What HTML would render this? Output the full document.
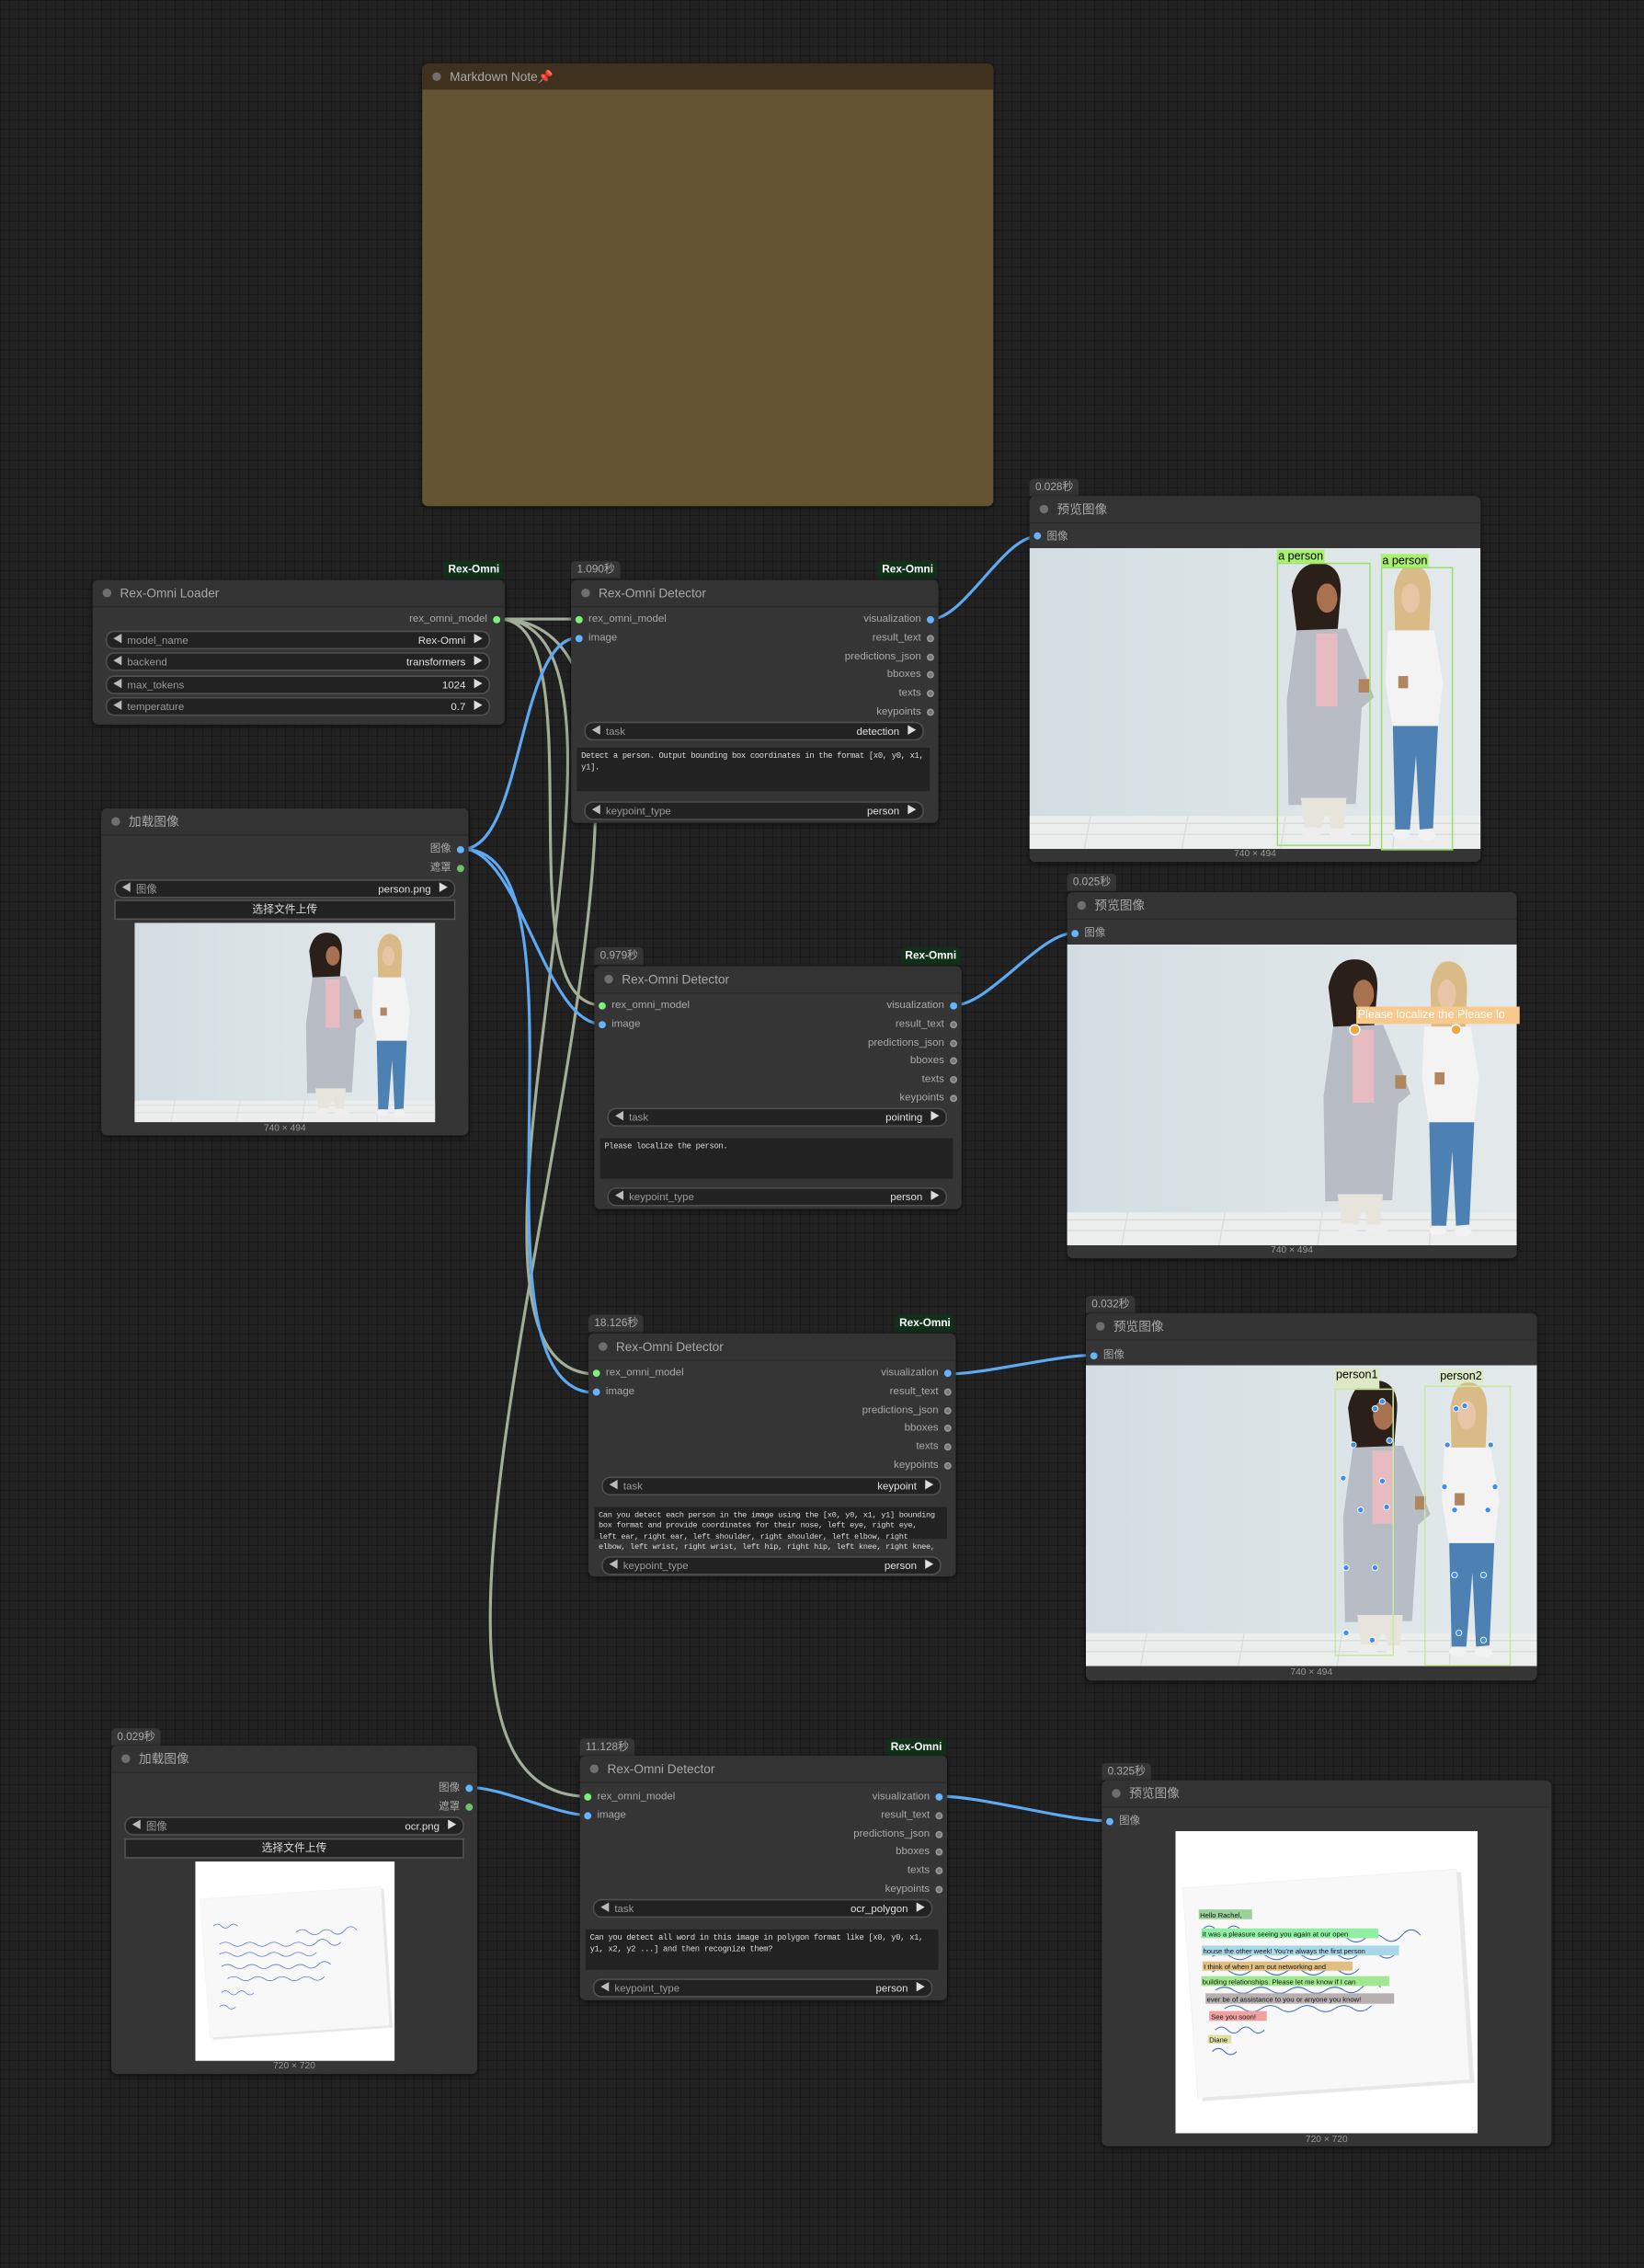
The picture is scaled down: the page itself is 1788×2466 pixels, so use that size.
<!DOCTYPE html>
<html><head><meta charset="utf-8">
<style>
html,body{margin:0;padding:0;width:1788px;height:2466px;overflow:hidden;background-color:#222;
background-image:linear-gradient(#1a1a1a 1px,transparent 1px),linear-gradient(90deg,#1a1a1a 1px,transparent 1px);background-size:10px 10px;}
#s{position:absolute;left:0;top:0;width:1137px;height:1568px;transform:scale(1.57256);transform-origin:0 0;font-family:"Liberation Sans","Noto Sans CJK SC",sans-serif;}
.n{position:absolute;background:#353535;border-radius:4px;box-shadow:0 1px 4px rgba(0,0,0,.6);}
.t{position:relative;height:18px;line-height:18px;background:#333;border-bottom:1px solid #2a2a2a;border-radius:4px 4px 0 0;font-size:8.7px;color:#a8a8a8;padding-left:19px;}
.t:before{content:"";position:absolute;left:7px;top:6px;width:6px;height:6px;border-radius:50%;background:#6f6f6f;}
.d{position:absolute;width:5px;height:5px;border-radius:50%;background:#777;border:0.5px solid #999;box-sizing:border-box}
.g{background:#7bf07b;border-color:#7bf07b}.b{background:#64b4ff;border-color:#64b4ff}.gg{background:#6cc36c;border-color:#6cc36c}
.li,.ro{position:absolute;font-size:7.3px;line-height:10px;color:#a9a9a9;white-space:nowrap}
.li{left:12px}.ro{right:12px}
.w{position:absolute;height:11px;line-height:11px;border-radius:6px;background:#222;border:1px solid #505050;font-size:7.3px;color:#9a9a9a;box-sizing:content-box}
.w .l{position:absolute;left:4px;font-size:7px;color:#bbb}
.w .k{position:absolute;left:14px}
.w .v{position:absolute;right:16px;color:#e0e0e0}
.w .r{position:absolute;right:4px;font-size:7px;color:#ddd}
.ta{position:absolute;background:#222;font-family:"Liberation Mono",monospace;font-size:5.6px;line-height:8.2px;color:#ddd;padding:2px 3px;box-sizing:border-box;overflow:visible;letter-spacing:-0.2px}
.btn{position:absolute;height:12px;line-height:12px;background:#222;border:1px solid #555;text-align:center;color:#ddd;font-size:7.5px}
.tb{position:absolute;height:12px;line-height:12px;background:#353535;border-radius:3px 3px 0 0;color:#aaa;font-size:7.5px;padding:0 4px}
.rb{position:absolute;height:12px;line-height:12px;background:#10301a;border-radius:3px 3px 0 0;color:#fff;font-size:7.5px;font-weight:bold;padding:0 3px}
.cap{position:absolute;font-size:6.5px;color:#999;text-align:center;width:100%}
.img{position:absolute;overflow:hidden}
.lab{position:absolute;font-size:8px;line-height:9px;color:#000;padding:0 1px}
.box{position:absolute;border:0.7px solid #9be070}
</style></head><body>
<svg width="0" height="0" style="position:absolute">
<defs>
<symbol id="photo" viewBox="0 0 740 494" preserveAspectRatio="none">
<defs><linearGradient id="wall" x1="0" x2="1"><stop offset="0" stop-color="#d3dde1"/><stop offset="1" stop-color="#e4eaec"/></linearGradient></defs>
<rect width="740" height="494" fill="url(#wall)"/>
<rect y="440" width="740" height="54" fill="#eceeed"/>
<path d="M0 452H740M0 470H740M100 440L90 494M260 440L250 494M420 440L412 494M600 440L596 494" stroke="#d8dcdc" stroke-width="2"/>
<path d="M430 70 Q440 20 480 25 Q515 30 510 80 L505 140 L440 150 Z" fill="#2b1f19"/>
<ellipse cx="488" cy="82" rx="17" ry="24" fill="#a8714f"/>
<path d="M438 135 L520 132 L548 200 L565 245 L545 262 L535 420 L425 422 L422 250 Z" fill="#b8bcc4"/>
<path d="M470 140 L505 140 L505 260 L470 260 Z" fill="#e6bcc0"/>
<path d="M445 410 L520 410 L515 460 L495 460 L488 430 L478 460 L452 460 Z" fill="#e7e4dc"/>
<ellipse cx="462" cy="466" rx="17" ry="8" fill="#eee"/><ellipse cx="510" cy="468" rx="18" ry="8" fill="#eee"/>
<rect x="540" y="215" width="18" height="22" fill="#b08560"/>
<path d="M598 70 Q605 25 630 28 Q660 32 658 80 L655 150 L600 150 Z" fill="#d9bb88"/>
<ellipse cx="625" cy="82" rx="15" ry="24" fill="#e9c5a8"/>
<path d="M588 135 L664 135 L678 220 L670 295 L596 297 L584 220 Z" fill="#f3f3f3"/>
<path d="M596 292 L670 292 L662 460 L640 462 L634 340 L624 462 L600 462 Z" fill="#4d80b3"/>
<rect x="605" y="210" width="16" height="20" fill="#b08560"/>
<ellipse cx="610" cy="470" rx="14" ry="8" fill="#f2f2f2"/><ellipse cx="652" cy="472" rx="14" ry="8" fill="#f2f2f2"/>
</symbol>
<symbol id="ocr" viewBox="0 0 987 987" preserveAspectRatio="none">
<rect width="987" height="987" fill="#fff"/>
<path d="M38 196 L933 134 L976 822 L88 882 Z" fill="#d8d8d8" opacity="0.6"/>
<path d="M23 186 L918 124 L961 812 L73 872 Z" fill="#f8f8f8" stroke="#e4e4e4"/>
<g fill="none" stroke="#3a62b8" stroke-width="3">
<path d="M90 320 q20 -20 40 0 t40 0 t40 0 M500 350 q30 -25 60 0 t60 0 t60 0 t60 -10 t60 0"/>
<path d="M120 410 q30 -20 60 0 t60 0 t60 0 t60 0 t60 0 t60 0 t60 0 t60 -10 t60 0 t60 0"/>
<path d="M120 460 q30 -20 60 0 t60 0 t60 0 t60 0 t60 0 t60 0 t60 0 t60 -10"/>
<path d="M130 520 q30 -20 60 0 t60 0 t60 0 t60 0 t60 0 t60 0 t60 0 t60 -10 t60 0"/>
<path d="M160 580 q30 -20 60 0 t60 0 t60 0 t60 0 t60 0 t60 0 t60 0 t60 -10"/>
<path d="M130 650 q20 -20 40 0 t40 0 t40 0 t40 0 M120 720 q20 -20 40 0 t40 0"/>
</g>
</symbol>
</defs></svg>

<div id="s">
<svg style="position:absolute;left:0;top:0" width="1137" height="1568">
<g fill="none" stroke="#a2ae9a" stroke-width="2">
<path d="M345 428 C359 428 386 428 400 428"/>
<path d="M345 428 C414 428 347 695 416 695"/>
<path d="M345 428 C476 428 281 950 412 950"/>
<path d="M345 428 C549 428 202 1242 406 1242"/>
</g>
<g fill="none" stroke="#5eaaf2" stroke-width="2">
<path d="M320 587 C362 587 358 441 400 441"/>
<path d="M320 587 C359 587 377 708 416 708"/>
<path d="M320 587 C417 587 315 963 412 963"/>
<path d="M326 1236 C347 1236 386 1255 406 1255"/>
<path d="M644 428 C667 428 694 371 717 371"/>
<path d="M660 695 C684 695 719 645 743 645"/>
<path d="M656 950 C681 950 731 937 756 937"/>
<path d="M650 1242 C680 1242 737 1259 767 1259"/>
</g>
</svg>

<div class="n" style="left:292px;top:44px;width:395px;height:306px;background:#655433">
<div class="t" style="background:#40311f;border-bottom:none;color:#aaa">Markdown Note<span style="color:#e0305a">📌</span></div>
</div>

<div class="rb" style="left:307px;top:388px">Rex-Omni</div>
<div class="n" style="left:64px;top:401px;width:285px;height:100px">
<div class="t">Rex-Omni Loader</div>
<span class="ro" style="top:22px">rex_omni_model</span><i class="d g" style="right:3px;top:25px"></i>
<div class="w" style="left:9px;right:10px;top:35px"><span class="l">◀</span><span class="k">model_name</span><span class="v">Rex-Omni</span><span class="r">▶</span></div>
<div class="w" style="left:9px;right:10px;top:50px"><span class="l">◀</span><span class="k">backend</span><span class="v">transformers</span><span class="r">▶</span></div>
<div class="w" style="left:9px;right:10px;top:66px"><span class="l">◀</span><span class="k">max_tokens</span><span class="v">1024</span><span class="r">▶</span></div>
<div class="w" style="left:9px;right:10px;top:81px"><span class="l">◀</span><span class="k">temperature</span><span class="v">0.7</span><span class="r">▶</span></div>
</div>

<div class="n" style="left:70px;top:559px;width:254px;height:226px">
<div class="t">加载图像</div>
<span class="ro" style="top:23px">图像</span><i class="d b" style="right:3px;top:26px"></i>
<span class="ro" style="top:36px">遮罩</span><i class="d gg" style="right:3px;top:39px"></i>
<div class="w" style="left:9px;right:9px;top:49px"><span class="l">◀</span><span class="k">图像</span><span class="v">person.png</span><span class="r">▶</span></div>
<div class="btn" style="left:9px;right:9px;top:63px">选择文件上传</div>
<svg class="img" style="left:23px;top:79px" width="208" height="138"><use href="#photo" width="208" height="138"/></svg>
<div class="cap" style="top:218px">740 × 494</div>
</div>

<div class="tb" style="left:395px;top:388px">1.090秒</div>
<div class="rb" style="left:607px;top:388px">Rex-Omni</div>
<div class="n" style="left:395px;top:401px;width:254px;height:168px">
<div class="t">Rex-Omni Detector</div>
<i class="d g" style="left:3px;top:25px"></i><span class="li" style="top:22px">rex_omni_model</span>
<i class="d b" style="left:3px;top:38px"></i><span class="li" style="top:35px">image</span>
<span class="ro" style="top:22px">visualization</span><i class="d b" style="right:3px;top:25px"></i>
<span class="ro" style="top:35px">result_text</span><i class="d" style="right:3px;top:38px"></i>
<span class="ro" style="top:48px">predictions_json</span><i class="d" style="right:3px;top:51px"></i>
<span class="ro" style="top:60px">bboxes</span><i class="d" style="right:3px;top:63px"></i>
<span class="ro" style="top:73px">texts</span><i class="d" style="right:3px;top:76px"></i>
<span class="ro" style="top:86px">keypoints</span><i class="d" style="right:3px;top:89px"></i>
<div class="w" style="left:9px;right:10px;top:98px"><span class="l">◀</span><span class="k">task</span><span class="v">detection</span><span class="r">▶</span></div>
<div class="ta" style="left:4px;right:6px;top:116px;height:30px">Detect a person. Output bounding box coordinates in the format [x0, y0, x1, y1].</div>
<div class="w" style="left:9px;right:10px;top:153px"><span class="l">◀</span><span class="k">keypoint_type</span><span class="v">person</span><span class="r">▶</span></div>
</div>

<div class="tb" style="left:712px;top:331px">0.028秒</div>
<div class="n" style="left:712px;top:343px;width:312px;height:253px">
<div class="t">预览图像</div>
<i class="d b" style="left:3px;top:25px"></i><span class="li" style="top:23px">图像</span>
<svg class="img" style="left:0;top:36px" width="312" height="208"><use href="#photo" width="312" height="208"/></svg>
<div class="box" style="left:171px;top:46px;width:63px;height:194px"></div>
<div class="lab" style="left:171px;top:37px;background:#a8f070">a person</div>
<div class="box" style="left:243px;top:49px;width:48px;height:194px"></div>
<div class="lab" style="left:243px;top:40px;background:#a8f070">a person</div>
<div class="cap" style="top:244px">740 × 494</div>
</div>

<div class="tb" style="left:411px;top:655px">0.979秒</div>
<div class="rb" style="left:623px;top:655px">Rex-Omni</div>
<div class="n" style="left:411px;top:668px;width:254px;height:168px">
<div class="t">Rex-Omni Detector</div>
<i class="d g" style="left:3px;top:25px"></i><span class="li" style="top:22px">rex_omni_model</span>
<i class="d b" style="left:3px;top:38px"></i><span class="li" style="top:35px">image</span>
<span class="ro" style="top:22px">visualization</span><i class="d b" style="right:3px;top:25px"></i>
<span class="ro" style="top:35px">result_text</span><i class="d" style="right:3px;top:38px"></i>
<span class="ro" style="top:48px">predictions_json</span><i class="d" style="right:3px;top:51px"></i>
<span class="ro" style="top:60px">bboxes</span><i class="d" style="right:3px;top:63px"></i>
<span class="ro" style="top:73px">texts</span><i class="d" style="right:3px;top:76px"></i>
<span class="ro" style="top:86px">keypoints</span><i class="d" style="right:3px;top:89px"></i>
<div class="w" style="left:9px;right:10px;top:98px"><span class="l">◀</span><span class="k">task</span><span class="v">pointing</span><span class="r">▶</span></div>
<div class="ta" style="left:4px;right:6px;top:119px;height:28px">Please localize the person.</div>
<div class="w" style="left:9px;right:10px;top:153px"><span class="l">◀</span><span class="k">keypoint_type</span><span class="v">person</span><span class="r">▶</span></div>
</div>

<div class="tb" style="left:738px;top:604px">0.025秒</div>
<div class="n" style="left:738px;top:617px;width:311px;height:253px">
<div class="t">预览图像</div>
<i class="d b" style="left:3px;top:26px"></i><span class="li" style="top:23px">图像</span>
<svg class="img" style="left:0;top:36px" width="311" height="208"><use href="#photo" width="311" height="208"/></svg>
<div class="lab" style="left:200px;top:79px;width:111px;height:12px;line-height:12px;background:#f8c88c;color:#fff;overflow:hidden;white-space:nowrap">Please localize the Please lo</div>
<i style="position:absolute;left:195px;top:91px;width:6px;height:6px;border-radius:50%;background:#f3a640;border:1px solid #fff"></i>
<i style="position:absolute;left:265px;top:91px;width:6px;height:6px;border-radius:50%;background:#f3a640;border:1px solid #fff"></i>
<div class="cap" style="top:244px">740 × 494</div>
</div>

<div class="tb" style="left:407px;top:909px">18.126秒</div>
<div class="rb" style="left:619px;top:909px">Rex-Omni</div>
<div class="n" style="left:407px;top:922px;width:254px;height:168px">
<div class="t">Rex-Omni Detector</div>
<i class="d g" style="left:3px;top:25px"></i><span class="li" style="top:22px">rex_omni_model</span>
<i class="d b" style="left:3px;top:38px"></i><span class="li" style="top:35px">image</span>
<span class="ro" style="top:22px">visualization</span><i class="d b" style="right:3px;top:25px"></i>
<span class="ro" style="top:35px">result_text</span><i class="d" style="right:3px;top:38px"></i>
<span class="ro" style="top:48px">predictions_json</span><i class="d" style="right:3px;top:51px"></i>
<span class="ro" style="top:60px">bboxes</span><i class="d" style="right:3px;top:63px"></i>
<span class="ro" style="top:73px">texts</span><i class="d" style="right:3px;top:76px"></i>
<span class="ro" style="top:86px">keypoints</span><i class="d" style="right:3px;top:89px"></i>
<div class="w" style="left:9px;right:10px;top:99px"><span class="l">◀</span><span class="k">task</span><span class="v">keypoint</span><span class="r">▶</span></div>
<div class="ta" style="left:4px;right:6px;top:120px;height:22px;white-space:pre;overflow:visible;font-size:5.5px;line-height:7.3px">Can you detect each person in the image using the [x0, y0, x1, y1] bounding
box format and provide coordinates for their nose, left eye, right eye,
left ear, right ear, left shoulder, right shoulder, left elbow, right
elbow, left wrist, right wrist, left hip, right hip, left knee, right knee,</div>
<div class="w" style="left:9px;right:10px;top:154px"><span class="l">◀</span><span class="k">keypoint_type</span><span class="v">person</span><span class="r">▶</span></div>
</div>

<div class="tb" style="left:751px;top:896px">0.032秒</div>
<div class="n" style="left:751px;top:908px;width:312px;height:254px">
<div class="t">预览图像</div>
<i class="d b" style="left:3px;top:27px"></i><span class="li" style="top:24px">图像</span>
<svg class="img" style="left:0;top:36px" width="312" height="208"><use href="#photo" width="312" height="208"/></svg>
<div class="box" style="left:172px;top:52px;width:39px;height:183px;border-color:#c8e8a0"></div>
<div class="lab" style="left:172px;top:38px;height:14px;line-height:10px;background:#dde8c4">person1</div>
<div class="box" style="left:234px;top:50px;width:58px;height:192px;border-color:#c8e8a0"></div>
<div class="lab" style="left:244px;top:39px;background:#dde8c4">person2</div>
<svg style="position:absolute;left:0;top:36px" width="312" height="208"><g fill="#3d8cf0" stroke="#fff" stroke-width="0.6">
<circle cx="205" cy="25" r="2"/><circle cx="200" cy="30" r="2"/><circle cx="185" cy="55" r="2"/><circle cx="210" cy="52" r="2"/><circle cx="178" cy="78" r="2"/><circle cx="205" cy="80" r="2"/><circle cx="190" cy="100" r="2"/><circle cx="208" cy="98" r="2"/><circle cx="180" cy="140" r="2"/><circle cx="200" cy="140" r="2"/><circle cx="180" cy="185" r="2"/><circle cx="198" cy="190" r="2"/>
<circle cx="262" cy="28" r="2"/><circle cx="256" cy="30" r="2"/><circle cx="250" cy="55" r="2"/><circle cx="280" cy="55" r="2"/><circle cx="248" cy="84" r="2"/><circle cx="283" cy="84" r="2"/><circle cx="255" cy="100" r="2"/><circle cx="278" cy="100" r="2"/><circle cx="255" cy="145" r="2"/><circle cx="275" cy="145" r="2"/><circle cx="258" cy="185" r="2"/><circle cx="275" cy="190" r="2"/>
</g></svg>
<div class="cap" style="top:245px">740 × 494</div>
</div>

<div class="tb" style="left:77px;top:1195px">0.029秒</div>
<div class="n" style="left:77px;top:1207px;width:253px;height:227px">
<div class="t">加载图像</div>
<span class="ro" style="top:24px">图像</span><i class="d b" style="right:3px;top:27px"></i>
<span class="ro" style="top:37px">遮罩</span><i class="d gg" style="right:3px;top:40px"></i>
<div class="w" style="left:9px;right:9px;top:49px"><span class="l">◀</span><span class="k">图像</span><span class="v">ocr.png</span><span class="r">▶</span></div>
<div class="btn" style="left:9px;right:9px;top:64px">选择文件上传</div>
<svg class="img" style="left:58px;top:80px" width="138" height="138"><use href="#ocr" width="138" height="138"/></svg>
<div class="cap" style="top:218px">720 × 720</div>
</div>

<div class="tb" style="left:401px;top:1202px">11.128秒</div>
<div class="rb" style="left:613px;top:1202px">Rex-Omni</div>
<div class="n" style="left:401px;top:1214px;width:254px;height:169px">
<div class="t">Rex-Omni Detector</div>
<i class="d g" style="left:3px;top:26px"></i><span class="li" style="top:23px">rex_omni_model</span>
<i class="d b" style="left:3px;top:39px"></i><span class="li" style="top:36px">image</span>
<span class="ro" style="top:23px">visualization</span><i class="d b" style="right:3px;top:26px"></i>
<span class="ro" style="top:36px">result_text</span><i class="d" style="right:3px;top:39px"></i>
<span class="ro" style="top:49px">predictions_json</span><i class="d" style="right:3px;top:52px"></i>
<span class="ro" style="top:61px">bboxes</span><i class="d" style="right:3px;top:64px"></i>
<span class="ro" style="top:74px">texts</span><i class="d" style="right:3px;top:77px"></i>
<span class="ro" style="top:87px">keypoints</span><i class="d" style="right:3px;top:90px"></i>
<div class="w" style="left:9px;right:10px;top:99px"><span class="l">◀</span><span class="k">task</span><span class="v">ocr_polygon</span><span class="r">▶</span></div>
<div class="ta" style="left:4px;right:6px;top:120px;height:28px">Can you detect all word in this image in polygon format like [x0, y0, x1, y1, x2, y2 ...] and then recognize them?</div>
<div class="w" style="left:9px;right:10px;top:154px"><span class="l">◀</span><span class="k">keypoint_type</span><span class="v">person</span><span class="r">▶</span></div>
</div>

<div class="tb" style="left:762px;top:1219px">0.325秒</div>
<div class="n" style="left:762px;top:1231px;width:311px;height:253px">
<div class="t">预览图像</div>
<i class="d b" style="left:3px;top:26px"></i><span class="li" style="top:23px">图像</span>
<svg class="img" style="left:51px;top:35px" width="209" height="209" viewBox="0 0 987 987">
<use href="#ocr" width="987" height="987"/>
<g font-family="Liberation Sans, sans-serif" font-size="23" fill="#111">
<rect x="76" y="256" width="174" height="32" fill="#9ad09a"/><text x="80" y="282">Hello Rachel,</text>
<rect x="84" y="318" width="578" height="32" fill="#8ef0a0"/><text x="88" y="344">It was a pleasure seeing you again at our open</text>
<rect x="86" y="374" width="644" height="32" fill="#a8d8e8"/><text x="90" y="400">house the other week! You're always the first person</text>
<rect x="88" y="426" width="490" height="30" fill="#e0c080"/><text x="92" y="451">I think of when I am out networking and</text>
<rect x="84" y="474" width="614" height="32" fill="#a0e890"/><text x="88" y="500">building relationships. Please let me know if I can</text>
<rect x="98" y="530" width="616" height="34" fill="#b8b0b0"/><text x="102" y="557">ever be of assistance to you or anyone you know!</text>
<rect x="110" y="588" width="188" height="32" fill="#f0a0a0"/><text x="116" y="614">See you soon!</text>
<rect x="106" y="666" width="76" height="28" fill="#e0e0a0"/><text x="110" y="690">Diane</text>
</g>
</svg>
<div class="cap" style="top:245px">720 × 720</div>
</div>
</div>
</body></html>
